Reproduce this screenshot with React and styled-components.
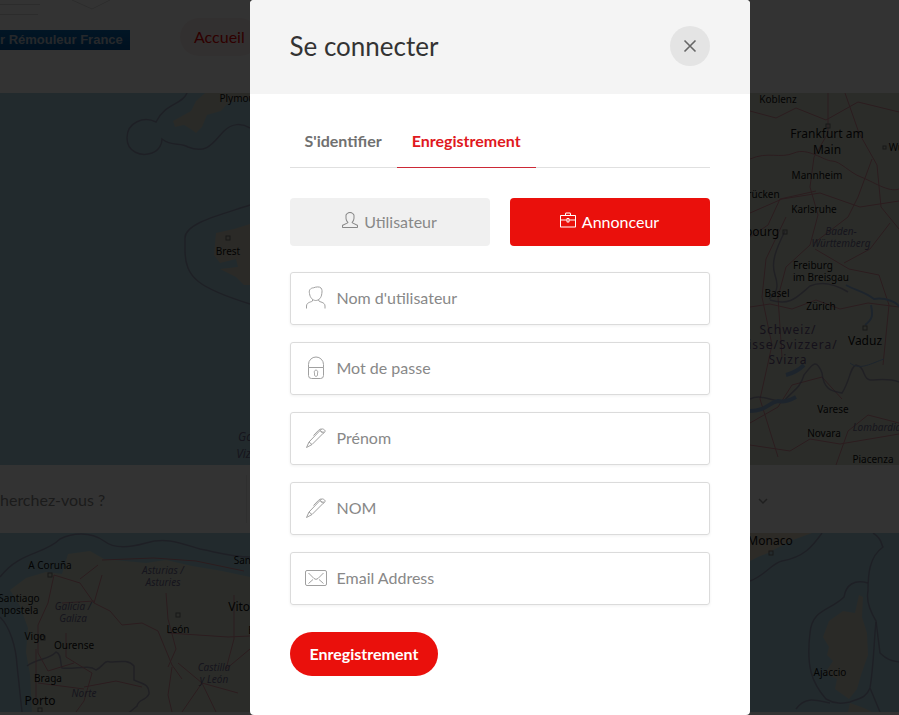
import React, { useState } from 'react';
import styled, { createGlobalStyle, css } from 'styled-components';
import { SlUser, SlBriefcase } from 'react-icons/sl';

const GlobalStyle = createGlobalStyle`
  * {
    box-sizing: border-box;
  }

  body {
    margin: 0;
    background: #fff;
    overflow: hidden;
    font-family: Lato, 'Open Sans', sans-serif;
    font-size: 15px;
    color: #707070;
  }

  button,
  input {
    font: inherit;
  }
`;

const Page = styled.div`
  display: flex;
  flex-direction: column;
`;

const SiteHeader = styled.header`
  display: flex;
  align-items: flex-start;
  gap: 50px;
  height: 93px;
  background: #fff;
`;

const Logo = styled.a`
  display: flex;
  flex-direction: column;
  width: 130px;
  color: #bcc8d4;
  font-family: 'Liberation Sans', sans-serif;
  font-size: 13px;
  font-weight: bold;
  line-height: 20px;
  text-decoration: none;
  white-space: nowrap;
`;

const LogoArt = styled.svg`
  display: block;
  width: 130px;
  height: 30px;
`;

const LogoName = styled.span`
  background: linear-gradient(#0a6cb8, #00529c);
`;

const NavLink = styled.a`
  margin-top: 18px;
  padding: 0 14px;
  border-radius: 50px;
  background: #fbf0f0;
  color: #e80000;
  font-size: 16px;
  line-height: 38px;
  text-decoration: none;
`;

const MapPanel = styled.svg`
  display: block;
  width: 100%;
  height: ${(props) => props.$height}px;
  background: #aad3df;
  font-family: 'Noto Sans', sans-serif;
`;

const SearchBar = styled.form`
  display: flex;
  align-items: center;
  justify-content: space-between;
  height: 68px;
  padding-right: 130px;
  background: #fff;
`;

const SearchInput = styled.input`
  width: 247px;
  height: 48px;
  padding: 0;
  border: 0;
  border-right: 1px solid #e8e8e8;
  background: transparent;
  font-size: 16px;

  &::placeholder {
    color: #888;
    opacity: 1;
  }
`;

const CategoryButton = styled.button`
  padding: 0;
  border: 0;
  background: none;
  color: #999;
`;

const Overlay = styled.div`
  position: fixed;
  inset: 0;
  display: flex;
  justify-content: center;
  align-items: flex-start;
  padding-left: 100px;
  background: rgba(0, 0, 0, 0.8);
`;

const Dialog = styled.section`
  width: 100%;
  max-width: 500px;
  min-height: 100vh;
  border-radius: 4px;
  background: #fff;
  overflow: hidden;
`;

const DialogHeader = styled.header`
  display: flex;
  align-items: center;
  justify-content: space-between;
  padding: 26px 40px 28px;
  background: #f4f4f4;
`;

const Title = styled.h3`
  margin: 0;
  color: #333;
  font-size: 26px;
  font-weight: 400;
  line-height: 40px;
`;

const CloseButton = styled.button`
  display: flex;
  align-items: center;
  justify-content: center;
  width: 40px;
  height: 40px;
  padding: 0;
  border: 0;
  border-radius: 50%;
  background: #e4e4e4;
  color: #666;
  cursor: pointer;
`;

const DialogBody = styled.div`
  padding: 22px 40px 38px;
`;

const Tabs = styled.nav`
  display: flex;
  margin-bottom: 30px;
  border-bottom: 1px solid #e0e0e0;
`;

const Tab = styled.a`
  margin-bottom: -1px;
  padding: 0 15px 1px;
  border-bottom: 1px solid ${(props) => (props.$active ? '#cc2936' : 'transparent')};
  color: ${(props) => (props.$active ? '#e01820' : '#707070')};
  font-size: 16px;
  font-weight: 700;
  line-height: 50px;
  text-decoration: none;
`;

const Roles = styled.div`
  display: grid;
  grid-template-columns: 1fr 1fr;
  gap: 20px;
  margin-bottom: 26px;
`;

const Role = styled.label`
  display: flex;
  align-items: center;
  justify-content: center;
  gap: 6px;
  height: 48px;
  padding-bottom: 2px;
  border-radius: 4px;
  background: #f0f0f0;
  color: #888;
  font-size: 16px;
  cursor: pointer;

  svg {
    margin-bottom: 2px;
  }

  ${(props) =>
    props.$checked &&
    css`
      background: #ea100c;
      color: #fff;
    `}
`;

const RoleInput = styled.input`
  appearance: none;
  position: absolute;
  margin: 0;
`;

const Fields = styled.div`
  display: flex;
  flex-direction: column;
  gap: 17px;
  margin-bottom: 27px;
`;

const Field = styled.label`
  display: flex;
  align-items: center;
  gap: 10px;
  height: 53px;
  padding: 0 14px 2px;
  border: 1px solid #dbdbdb;
  border-radius: 3px;
  box-shadow: 0 1px 3px rgba(0, 0, 0, 0.06);
`;

const FieldIcon = styled.svg`
  flex: none;
  width: 22px;
  height: 24px;
  fill: none;
  stroke: #a0a0a0;
`;

const TextInput = styled.input`
  flex: 1;
  min-width: 0;
  padding: 0;
  border: 0;
  outline: 0;
  background: none;
  color: #666;
  font-size: 16px;

  &::placeholder {
    color: #888;
    opacity: 1;
  }
`;

const SubmitButton = styled.button`
  padding: 0 20px;
  border: 0;
  border-radius: 50px;
  background: #ea100c;
  color: #fff;
  font-size: 16px;
  font-weight: 700;
  line-height: 44px;
  cursor: pointer;
`;

const PersonIcon = () => (
  <FieldIcon viewBox="0 0 22 24">
    <path d="M4.5 7.5C3.6 4 5.5 2 8.5 1.8C11 .8 14.5.4 16 2c1.200 1.500 1.200 3.500.8 5.500C16.500 12 13.500 14.500 10.700 14.500C8 14.500 5 12 4.500 7.500z" />
    <path d="M7.500 13.500v1.500c-.5 1-6 1-6 5v2.500M13.800 13.500v1.500c.5 1 6.200 1 6.200 5v2.500" />
  </FieldIcon>
);

const LockIcon = () => (
  <FieldIcon viewBox="0 0 22 24">
    <path d="M3.500 11.500V8.500a7.500 7.500 0 0 1 15 0v3M3.500 11.500h15v8a3 3 0 0 1-3 3h-9a3 3 0 0 1-3-3z" />
    <path d="M11 14a2 2 0 0 1 1.500 3v2.500c0 1-3 1-3 0V17A2 2 0 0 1 11 14z" strokeWidth="0.9" />
  </FieldIcon>
);

const PenIcon = () => (
  <FieldIcon viewBox="0 0 22 24">
    <path d="M1.500 21.500l2.500-5.500L15 4.500l3 3L7 18.500zM4 16l3 2.500M15 4.500l1.500-1.300c1-1 4.500 1 3.500 2.600L18 7.500" />
    <path d="M8.500 9.500l5-5.200c1-1 2-1.500 3.200-1M15 4.500c1 1.500 3 2 4 1.500" />
  </FieldIcon>
);

const MailIcon = () => (
  <FieldIcon viewBox="0 0 22 24">
    <rect x="0.5" y="4.500" width="21" height="15" rx="1.500" />
    <path d="M3.500 7l5.500 5.500a3 3 0 0 0 4 0L18.500 7M3.500 17.500l4.500-4M18.500 17.500l-4.500-4" />
  </FieldIcon>
);

const FIELDS = [
  { name: 'username', label: "Nom d'utilisateur", type: 'text', Icon: PersonIcon },
  { name: 'password', label: 'Mot de passe', type: 'password', Icon: LockIcon },
  { name: 'firstName', label: 'Prénom', type: 'text', Icon: PenIcon },
  { name: 'lastName', label: 'NOM', type: 'text', Icon: PenIcon },
  { name: 'email', label: 'Email Address', type: 'email', Icon: MailIcon },
];

const ROLES = [
  { value: 'guest', label: 'Utilisateur', Icon: SlUser },
  { value: 'owner', label: 'Annonceur', Icon: SlBriefcase },
];

const Land = styled.path`
  fill: ${(props) => props.$fill || '#d6dccc'};
`;

const Border = styled.path`
  fill: none;
  stroke: #8c86a8;
  stroke-width: 1.5;
  opacity: 0.7;
`;

const Road = styled.path`
  fill: none;
  stroke: #d58c98;
  stroke-width: 1;
`;

const River = styled.path`
  fill: none;
  stroke: #8fb4dc;
  stroke-width: ${(props) => props.$width || 1};
`;

const Town = styled.rect`
  fill: none;
  stroke: #777;
`;

const Place = styled.text`
  fill: #111;
  font-size: ${(props) => props.$size || 10}px;
  text-anchor: middle;
`;

const Region = styled(Place)`
  fill: #6f6a90;
  font-style: italic;
`;

const Country = styled(Place)`
  fill: #6b5785;
  letter-spacing: 1px;
`;

const NorthMap = () => (
  <MapPanel $height={372} viewBox="0 0 899 372" preserveAspectRatio="xMidYMin slice">
    <Land $fill="#cfcfc4" d="M250 0h-45l-9 8-5 10-18 10 2 6 9-2 8 5 4 3 6-6 5-12 14-4 7-8 22-5z" />
    <Land $fill="#d8d2c0" d="M250 131l-16 5-18 4-2 22 6 8 16-4 2 8-18 2 16 8 8 8h6z" />
    <Land d="M740 0h159v372H740z" />
    <Border d="M187 0c-5 12-22 10-31 29-12-6-29 0-29 16 0 14 14 19 25 15 8-3 10-10 10-14 10 8 18 3 26 8 20 8 26-6 36-16 8-8 18-8 26-3" />
    <Border d="M250 112c-30 10-65 18-65 33v12c0 28 14 38 65 54" />
    <Road d="M750 66c18-8 30 0 44-6s30 8 38 8 18 12 29 16 28 16 38 12M828 0v40l-14 24-4 30 8 28-8 30-24 22-8 30 4 60" />
    <Road d="M750 120l32-14 38-6 40 14 39-6M845 0l14 40 18 32 4 42 18 22M750 214l20-3 22 5 24-9 24 9 28-6 31 4M872 66l-14 38-10 20-34 26" />
    <Road d="M815 156l34 20 30 6 10 30-6 60M890 130l-20 26-26 14M750 330l28-16 14-22 30-8 20 22M836 372l12-34 20-16 31 8M750 352l40 6 20-12 30 5 59-10" />
    <Road d="M786 124l-20 42-4 38 10 48-12 54 18 58M750 18l26 7 20-10 30 12 32-18 41 10M816 98l-36 8-12 26-18 12" />
    <Border d="M750 306c12-6 24 4 34 2 8-10 16-12 20-26 8-10 12-18 18-2 2 20 14 18 20 20 8-12 8-26 14-28 10 2 6 14 14 15 10 0 18-2 29 2" />
    <Border d="M785 138c-10 20-14 32-10 44s2 18-6 24M770 207c20 6 26-2 40-14 14-6 28 0 38 6" />
    <River $width={2} d="M846 192c8 5 18 6 28 14 12-2 24 4 25 8M871 212c2 10 2 14-6 20" />
    <River $width={4} d="M786 282c8-2 14-6 18-10M750 318c16 0 18-8 28-10 8 2 14-2 18-4" />
    <River d="M850 270c10 8 22 0 34-4" />
    <Town x="826" y="31" width="4" height="4" />
    <Town x="783" y="137" width="4" height="4" />
    <Town x="863" y="233" width="4" height="4" />
    <Town x="883" y="53" width="3" height="3" />
    <Town x="226" y="143" width="4" height="4" />
    <Place x="242" y="9">Plymouth</Place>
    <Place x="228" y="162">Brest</Place>
    <Place x="778" y="10">Koblenz</Place>
    <Place x="827" y="45" $size={12}>Frankfurt am</Place>
    <Place x="827" y="61" $size={12}>Main</Place>
    <Place x="817" y="86">Mannheim</Place>
    <Place x="912" y="58">Würzburg</Place>
    <Place x="750" y="105">Saarbrücken</Place>
    <Place x="814" y="120">Karlsruhe</Place>
    <Place x="748" y="143" $size={12}>Strasbourg</Place>
    <Region x="841" y="142">Baden-</Region>
    <Region x="841" y="154">Württemberg</Region>
    <Place x="813" y="176">Freiburg</Place>
    <Place x="821" y="188">im Breisgau</Place>
    <Place x="777" y="204">Basel</Place>
    <Place x="821" y="217">Zürich</Place>
    <Country x="788" y="241" $size={12}>Schweiz/</Country>
    <Country x="785" y="256" $size={12}>Suisse/Svizzera/</Country>
    <Country x="788" y="271" $size={12}>Svizra</Country>
    <Place x="865" y="252" $size={12}>Vaduz</Place>
    <Place x="833" y="320">Varese</Place>
    <Place x="824" y="344">Novara</Place>
    <Region x="877" y="338">Lombardia</Region>
    <Place x="873" y="370">Piacenza</Place>
    <Region x="260" y="348" $size={12}>Golfe de</Region>
    <Region x="256" y="365" $size={12}>Vizcaya</Region>
  </MapPanel>
);

const SouthMap = () => (
  <MapPanel $height={179} viewBox="0 0 899 179" preserveAspectRatio="xMidYMin slice">
    <Land d="M32 179l-2-38-4-22 2-24-8-22-10-16 16-12 20-6 16 2 6-20 22-3 14 8 42 4 20-3 26 6 30 5 28 6v135z" />
    <Land $fill="#ded5c4" d="M750 0h62l-22 8-22 12-10 4-8 4z" />
    <Land $fill="#d2d2c4" d="M859 62l4 2-1 20 5 16 1 22-7 20-4 14-8 10-14-10 2-10-12-6 8-12-6-6 2-8-6-10 6-16 14-10 12 2z" />
    <Land $fill="#d2d2c4" d="M850 170l14 5 8 4h-24z" />
    <Border d="M0 44c20-26 44-22 60-38 12-6 30-8 44 2 10 8 28 6 42 2 20-6 34 0 54 6 20 4 34 8 50 8" />
    <Border d="M0 84c10 10 16 30 17 48l5 47" />
    <Border d="M27 133c10-8 22-6 29-14 6 2 4 12 6 16 12 2 26-4 34 2 8-4 8-10 14-8 8 0 18-3 24 4v14c8 4 16 4 15 14-4 8-10 4-12 12l-12 10" />
    <Road d="M54 42l-6 28-10 22v28l10 18 26-8M54 42l26 8 14 20 16 8 12 14 20-2 16 8 14 34 10 14M94 70l8-28M168 100l60 4 22-1M172 134l-4 28 4 17M178 130l24 20 14 29M202 150l-20 29M202 150l36 10" />
    <Road d="M36 116v54M66 100v24l26 16-8 28-8 11M84 154l32-6 26 6M102 27l52-2 42 3 48 10M166 60l2 26 8 30-8 18M234 62v44l-8 30 24-20M38 150l46 6M62 70l32-2M80 46l18-14" />
    <Border d="M750 48c16-6 22-18 32-20 22-4 30-14 40-28M873 0c10 6 8 12 10 14-14 10-15 28-15 44-2 10 2 20 8 30l4 32c8 8 14 8 19 9" />
    <Border d="M868 50c-14-4-22 2-24 14-14 14-32 12-34 36-4 34 2 50 16 66 10 6 18 4 24 3 10-4 16-4 20-14 4-24 4-50 6-66M796 176c10-14 22-8 34-6M870 155l10 24" />
    <Town x="48" y="40" width="4" height="4" />
    <Town x="41" y="103" width="4" height="4" />
    <Town x="176" y="80" width="4" height="4" />
    <Town x="769" y="18" width="4" height="4" />
    <Town x="38" y="175" width="4" height="4" />
    <Place x="50" y="36">A Coruña</Place>
    <Place x="19" y="69">Santiago</Place>
    <Place x="3" y="81">de Compostela</Place>
    <Place x="35" y="107">Vigo</Place>
    <Place x="74" y="116">Ourense</Place>
    <Place x="48" y="149">Braga</Place>
    <Place x="40" y="172" $size={12}>Porto</Place>
    <Place x="178" y="100">León</Place>
    <Place x="258" y="31">Santander</Place>
    <Place x="269" y="78" $size={12}>Vitoria-Gasteiz</Place>
    <Place x="265" y="101">Burgos</Place>
    <Region x="163" y="41">Asturias /</Region>
    <Region x="163" y="53">Asturies</Region>
    <Region x="73" y="77">Galicia /</Region>
    <Region x="73" y="89">Galiza</Region>
    <Region x="214" y="138">Castilla</Region>
    <Region x="214" y="150">y León</Region>
    <Region x="84" y="164">Norte</Region>
    <Place x="770" y="12" $size={12}>Monaco</Place>
    <Place x="830" y="143">Ajaccio</Place>
  </MapPanel>
);

const SignInDialog = () => {
  const [tab, setTab] = useState('register');
  const [role, setRole] = useState('owner');

  const handleSubmit = (e) => {
    e.preventDefault();
  };

  return (
    <Dialog role="dialog" aria-labelledby="dialog-title">
      <DialogHeader>
        <Title id="dialog-title">Se connecter</Title>
        <CloseButton type="button" aria-label="Fermer">
          <svg width="14" height="14" viewBox="0 0 14 14" fill="none" stroke="currentColor" strokeWidth="1.6">
            <path d="M1.500 1.500l11 11M12.500 1.500l-11 11" />
          </svg>
        </CloseButton>
      </DialogHeader>

      <DialogBody>
        <Tabs>
          <Tab href="#login" $active={tab === 'login'} onClick={() => setTab('login')}>
            S'identifier
          </Tab>
          <Tab href="#register" $active={tab === 'register'} onClick={() => setTab('register')}>
            Enregistrement
          </Tab>
        </Tabs>

        <form onSubmit={handleSubmit}>
          <Roles>
            {ROLES.map(({ value, label, Icon }) => (
              <Role key={value} $checked={role === value}>
                <RoleInput
                  type="radio"
                  name="role"
                  value={value}
                  checked={role === value}
                  onChange={() => setRole(value)}
                />
                <Icon size={16} />
                {label}
              </Role>
            ))}
          </Roles>

          <Fields>
            {FIELDS.map(({ name, label, type, Icon }) => (
              <Field key={name}>
                <Icon />
                <TextInput type={type} name={name} placeholder={label} aria-label={label} />
              </Field>
            ))}
          </Fields>

          <SubmitButton type="submit">Enregistrement</SubmitButton>
        </form>
      </DialogBody>
    </Dialog>
  );
};

const App = () => (
  <>
    <GlobalStyle />
    <Page>
      <SiteHeader>
        <Logo href="#home">
          <LogoArt viewBox="0 0 130 30" fill="none" stroke="#ddd">
            <path d="M0 4.500h40M0 14.500h38M72 0l20 9 18-9" />
          </LogoArt>
          <LogoName>r Rémouleur France</LogoName>
        </Logo>
        <NavLink href="#accueil">Accueil</NavLink>
      </SiteHeader>
      <NorthMap />
      <SearchBar>
        <SearchInput type="text" placeholder="herchez-vous ?" aria-label="Recherche" />
        <CategoryButton type="button" aria-label="Catégories">
          <svg width="12" height="8" viewBox="0 0 12 8" fill="none" stroke="currentColor" strokeWidth="1.500">
            <path d="M2 2l4 4 4-4" />
          </svg>
        </CategoryButton>
      </SearchBar>
      <SouthMap />
    </Page>
    <Overlay>
      <SignInDialog />
    </Overlay>
  </>
);

export default App;
